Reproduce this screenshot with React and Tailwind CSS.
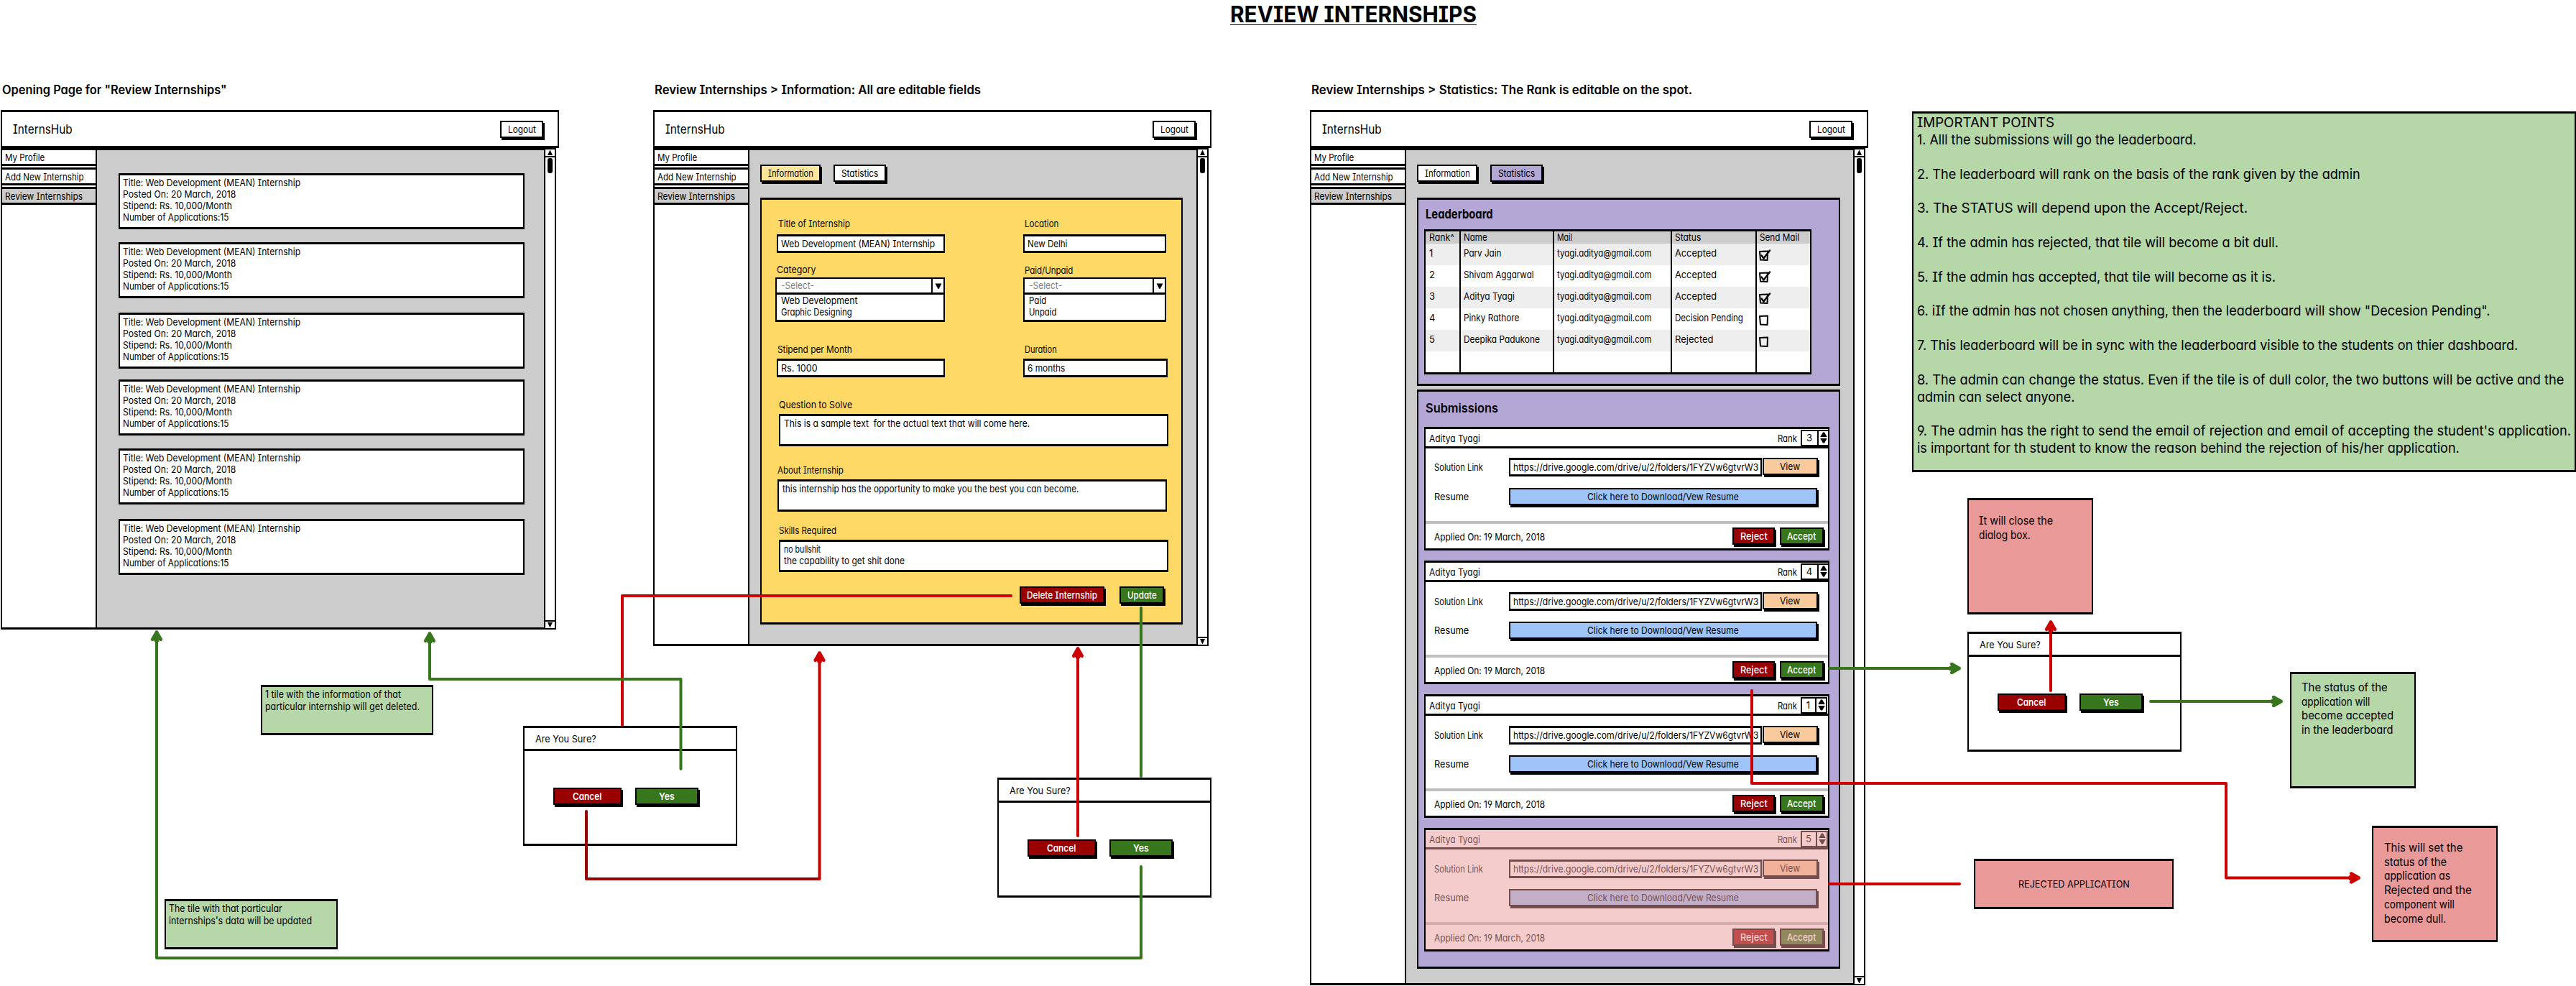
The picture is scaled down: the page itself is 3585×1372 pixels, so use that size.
import { useLayoutEffect, useRef } from "react";

/* Text condensed or widened horizontally so that the line is `w` pixels wide. */
function T({ w, className = "", children }) {
  const ref = useRef(null);
  useLayoutEffect(() => {
    const el = ref.current;
    if (!w || !el) return;
    const natural = el.offsetWidth;
    el.style.transform = `scaleX(${w / natural})`;
    el.style.marginRight = `${w - natural}px`;
  }, [w, children]);
  return (
    <span className={`block whitespace-pre ${className}`}>
      <span ref={ref} className="inline-block origin-left">{children}</span>
    </span>
  );
}

const FRAME = "border-x-2 border-y-[3px] border-black";

function Button({ w, className = "", children }) {
  return (
    <button className={`flex h-[24px] shrink-0 items-center justify-center border-2 border-black text-[13px] leading-4 shadow-[2px_3px_0_#000] ${className}`}>
      <T w={w}>{children}</T>
    </button>
  );
}

function Window({ title, titleWidth, className, bodyClass, children }) {
  const menu = [
    ["My Profile", 55, "bg-white"],
    ["Add New Internship", 110, "bg-white"],
    ["Review Internships", 108, "bg-[#ccc]"],
  ];
  return (
    <section className={`absolute top-[116px] flex w-[777px] flex-col ${className}`}>
      <h2 className="h-[37px] pl-[2px] text-[17px] font-semibold leading-[18px]">
        <T w={titleWidth}>{title}</T>
      </h2>
      <header className={`flex h-[53px] items-center justify-between bg-white pl-[15px] pr-[20px] ${FRAME}`}>
        <T w={83} className="pt-px text-[17px] leading-5">InternsHub</T>
        <Button w={39} className="w-[60px] bg-white">Logout</Button>
      </header>
      <div className={`flex ${bodyClass}`}>
        <nav className="flex w-[132px] shrink-0 flex-col gap-[2px] border-b-[3px] border-l-2 border-black bg-white">
          {menu.map(([label, w, bg]) => (
            <div key={label} className={`-ml-[2px] flex h-[25px] items-center border-y-[3px] border-l-2 border-black pl-[4px] text-[13px] leading-4 ${bg}`}>
              <T w={w}>{label}</T>
            </div>
          ))}
        </nav>
        <main className={`w-[626px] shrink-0 bg-[#ccc] ${FRAME}`}>{children}</main>
        <div className="flex w-[15px] shrink-0 flex-col items-center border-b-2 border-r-2 border-t-2 border-black bg-white">
          <svg viewBox="0 0 13 9" className="h-[9px] w-[13px]"><path d="M6.5 0.5 10 8H3Z" /></svg>
          <div className="h-[2px] w-full bg-black" />
          <div className="mt-px h-[21px] w-[7px] rounded-[3px] bg-black" />
          <div className="mt-auto h-[2px] w-full bg-black" />
          <svg viewBox="0 0 13 9" className="h-[9px] w-[13px]"><path d="M6.5 8.5 10 1H3Z" /></svg>
        </div>
      </div>
    </section>
  );
}

function InternshipCard({ className = "" }) {
  return (
    <article className={`h-[78px] w-[565px] bg-white pl-[4px] pt-[2px] text-[13px] leading-4 ${FRAME} ${className}`}>
      <T w={247}>Title: Web Development (MEAN) Internship</T>
      <T w={157}>Posted On: 20 March, 2018</T>
      <T w={152}>Stipend: Rs. 10,000/Month</T>
      <T w={147}>Number of Applications:15</T>
    </article>
  );
}

function Field({ w, className = "", children }) {
  return (
    <div className={`flex h-[26px] items-center bg-white pl-[4px] leading-4 ${FRAME} ${className}`}>
      <T w={w} className="-mt-px">{children}</T>
    </div>
  );
}

function Select({ options, className = "", listClass = "" }) {
  return (
    <div className={className}>
      <div className="flex h-[21px] border-2 border-b-0 border-black bg-white">
        <T w={46} className="flex-1 pl-[6px] pt-px text-[#808080]">-Select-</T>
        <div className="flex w-[17px] items-center justify-center border-l-2 border-black">
          <svg viewBox="0 0 10 8" className="h-[8px] w-[10px]"><path d="M0.5 0.5h9L5.5 8h-1Z" /></svg>
        </div>
      </div>
      <div className={`h-[41px] bg-white pl-[6px] ${FRAME} ${listClass}`}>
        {options.map(([label, w]) => <T key={label} w={w}>{label}</T>)}
      </div>
    </div>
  );
}

function TextArea({ lines, className = "" }) {
  return (
    <div className={`h-[45px] w-[542px] bg-white pl-[5px] pt-[2px] ${FRAME} ${className}`}>
      {lines.map(([text, w]) => <T key={text} w={w}>{text}</T>)}
    </div>
  );
}

function Tabs({ info, stats }) {
  return (
    <div className="flex gap-[18px] pl-[15px] pt-[20px]">
      <Button w={63} className={`w-[84px] ${info}`}>Information</Button>
      <Button w={51} className={`w-[73px] ${stats}`}>Statistics</Button>
    </div>
  );
}

function InformationForm() {
  return (
    <form className={`ml-[15px] mt-[22px] h-[594px] w-[588px] bg-[#ffd966] pl-[21px] pt-[25px] text-[13px] leading-4 ${FRAME}`}>
      <div className="flex gap-[109px]">
        <div className="w-[234px]">
          <T w={100} className="pl-[2px]">Title of Internship</T>
          <Field w={214} className="mt-[7px]">Web Development (MEAN) Internship</Field>
          <T w={54} className="mt-[15px]">Category</T>
          <Select className="-ml-[2px] mt-[3px]" options={[["Web Development", 107], ["Graphic Designing", 99]]} />
          <T w={104} className="mt-[30px] pl-px">Stipend per Month</T>
          <Field w={51} className="mt-[5px]">Rs. 1000</Field>
        </div>
        <div className="w-[199px]">
          <T w={47} className="pl-[2px]">Location</T>
          <Field w={55} className="mt-[7px]">New Delhi</Field>
          <T w={67} className="mt-[16px] pl-[2px]">Paid/Unpaid</T>
          <Select className="mt-[2px]" listClass="pl-[5px]" options={[["Paid", 24], ["Unpaid", 38]]} />
          <T w={45} className="mt-[30px] pl-[2px]">Duration</T>
          <Field w={52} className="mt-[5px] w-[201px]">6 months</Field>
        </div>
      </div>
      <div className="pl-[3px]">
        <T w={102} className="mt-[30px]">Question to Solve</T>
        <TextArea className="mt-[5px]" lines={[["This is a sample text  for the actual text that will come here.", 342]]} />
        <T w={92} className="-ml-[2px] mt-[25px]">About Internship</T>
        <TextArea className="-ml-[2px] mt-[5px]" lines={[["this internship has the opportunity to make you the best you can become.", 412]]} />
        <T w={80} className="mt-[18px]">Skills Required</T>
        <TextArea className="mt-[5px]" lines={[["no bullshit", 51], ["the capability to get shit done", 168]]} />
        <div className="mt-[20px] flex gap-[21px] pl-[335px] font-medium text-white">
          <Button w={98} className="w-[118px] bg-[#990000]">Delete Internship</Button>
          <Button w={41} className="w-[62px] bg-[#38761d]">Update</Button>
        </div>
      </div>
    </form>
  );
}

function CheckBox({ checked }) {
  return (
    <svg viewBox="0 0 18 18" className="h-[18px] w-[18px]" fill="none" stroke="#000" strokeWidth="2" strokeLinecap="round" strokeLinejoin="round">
      <path d="M2 4 13 3.6 12.6 16 3 15.6Z" />
      {checked && <path d="M4.5 9.5 7.5 13.5 16 2.5" strokeWidth="2.4" />}
    </svg>
  );
}

function Leaderboard() {
  const mail = "tyagi.aditya@gmail.com";
  const rows = [
    ["1", "Parv Jain", 52, "Accepted", 58, true],
    ["2", "Shivam Aggarwal", 98, "Accepted", 58, true],
    ["3", "Aditya Tyagi", 71, "Accepted", 58, true],
    ["4", "Pinky Rathore", 77, "Decision Pending", 95, false],
    ["5", "Deepika Padukone", 106, "Rejected", 54, false],
  ];
  const cols = "grid grid-cols-[47px_130px_164px_118px_76px]";
  const cell = "border-l-2 border-black pl-[4px]";
  return (
    <section className={`ml-[15px] mt-[22px] h-[262px] w-[589px] bg-[#b4a7d6] pl-[8px] ${FRAME}`}>
      <h3 className="pl-[2px] pt-[10px] text-[17px] font-bold leading-5"><T w={94}>Leaderboard</T></h3>
      <div className={`mt-[11px] h-[202px] w-[539px] bg-white text-[13px] leading-4 ${FRAME}`}>
        <div className={`h-[17px] bg-[#ccc] ${cols}`}>
          <T w={35} className="pl-[5px]">Rank^</T>
          <T w={33} className={cell}>Name</T>
          <T w={21} className={cell}>Mail</T>
          <T w={36} className={cell}>Status</T>
          <T w={55} className={cell}>Send Mail</T>
        </div>
        {rows.map(([rank, name, nw, status, sw, checked]) => (
          <div key={rank} className={`h-[30px] odd:bg-white even:bg-[#eee] ${cols}`}>
            <T className="pl-[5px] pt-[5px]">{rank}</T>
            <T w={nw} className={`pt-[5px] ${cell}`}>{name}</T>
            <T w={132} className={`pt-[5px] ${cell}`}>{mail}</T>
            <T w={sw} className={`pt-[5px] ${cell}`}>{status}</T>
            <div className="border-l-2 border-black pl-[2px] pt-[7px]"><CheckBox checked={checked} /></div>
          </div>
        ))}
        <div className={`h-[29px] ${cols}`}>
          <div />
          <div className={cell} />
          <div className={cell} />
          <div className={cell} />
          <div className={cell} />
        </div>
      </div>
    </section>
  );
}

function Submission({ rank, spinner = "w-[40px]", first, rejected }) {
  return (
    <article className={`relative h-[172px] w-[564px] shrink-0 bg-white text-[13px] leading-4 ${FRAME}`}>
      <header className="flex h-[27px] items-center border-b-[3px] border-black pl-[5px]">
        <T w={71} className="pt-px">Aditya Tyagi</T>
        <T w={27} className="ml-auto pt-px">Rank</T>
        <div className="ml-[5px] w-[38px]">
          <div className={`flex h-[23px] border-2 border-black bg-white ${spinner}`}>
            <span className="flex-1 pr-px pt-px text-center">{rank}</span>
            <span className="flex w-[15px] items-center justify-center border-l-2 border-black">
              <svg viewBox="0 0 10 16" className="h-[16px] w-[10px]"><path d="M4 0.5h2L9.8 7H0.2ZM0.2 9h9.6L6 15.5H4Z" /></svg>
            </span>
          </div>
        </div>
      </header>
      <div className={`h-[101px] pl-[12px] ${first ? "pt-[13px]" : "pt-[14px]"}`}>
        <div className="flex h-[26px] items-center">
          <T w={68} className="w-[104px]">Solution Link</T>
          <Field w={341} className="w-[352px] shrink-0">https://drive.google.com/drive/u/2/folders/1FYZVw6gtvrW3</Field>
          <Button w={28} className="ml-px w-[77px] -translate-y-px bg-[#f9cb9c]">View</Button>
        </div>
        <div className={`flex items-center ${first ? "mt-[16px]" : "mt-[15px]"}`}>
          <T w={48} className="w-[104px]">Resume</T>
          <Button w={211} className="w-[429px] bg-[#9fc5f8]">Click here to Download/Vew Resume</Button>
        </div>
      </div>
      <div className="h-[4px] bg-[#bfbfbf]" />
      <footer className="flex h-[34px] items-center pl-[12px]">
        <T w={154} className="pt-[2px]">Applied On: 19 March, 2018</T>
        <div className="ml-auto flex gap-[7px] pr-[6px] font-medium text-white">
          <Button w={38} className="w-[59px] bg-[#990000]">Reject</Button>
          <Button w={40} className="w-[61px] bg-[#38761d]">Accept</Button>
        </div>
      </footer>
      {rejected && <div className="absolute inset-0 bg-[#ea9999]/50" />}
    </article>
  );
}

function Submissions() {
  return (
    <section className={`ml-[15px] mt-[5px] h-[806px] w-[589px] bg-[#b4a7d6] pl-[8px] ${FRAME}`}>
      <h3 className="pl-[2px] pt-[13px] text-[17px] font-semibold leading-5"><T w={101}>Submissions</T></h3>
      <div className="mt-[16px] flex flex-col gap-[14px]">
        <Submission rank="3" first />
        <Submission rank="4" />
        <Submission rank="1" spinner="w-[37px]" />
        <Submission rank="5" spinner="w-[38px]" rejected />
      </div>
    </section>
  );
}

function Dialog({ className }) {
  return (
    <section className={`absolute h-[167px] w-[298px] bg-white ${FRAME} ${className}`}>
      <header className="flex h-[32px] items-center border-b-[3px] border-black pl-[15px]">
        <T w={85} className="pt-px text-[13px] leading-4">Are You Sure?</T>
      </header>
      <div className="flex gap-[19px] pl-[40px] pt-[51px] font-semibold text-white">
        <Button w={40} className="w-[95px] bg-[#990000]">Cancel</Button>
        <Button w={22} className="w-[88px] bg-[#38761d]">Yes</Button>
      </div>
    </section>
  );
}

function Note({ lines, className }) {
  return (
    <aside className={`absolute ${FRAME} ${className}`}>
      {lines.map(([text, w], i) => (
        <T key={i} w={w}>{text || " "}</T>
      ))}
    </aside>
  );
}

function Arrow({ x, y, turn = 0, color }) {
  return (
    <path
      transform={`translate(${x} ${y}) rotate(${turn})`}
      d="M-1 1H1L7.5 12.5 6.5 14.5 2.5 13V15.5H-2.5V13L-6.5 14.5-7.5 12.5Z"
      fill={color}
      stroke={color}
      strokeWidth="1.5"
      strokeLinejoin="round"
    />
  );
}

function Connectors() {
  const red = "#cc0000";
  const dark = "#990000";
  const green = "#38761d";
  return (
    <svg viewBox="0 0 3585 1372" className="pointer-events-none absolute left-0 top-0 h-[1372px] w-[3585px]" fill="none" strokeWidth="4" strokeLinecap="round" strokeLinejoin="round">
      <path stroke={red} d="M1407 829H866V1009" />
      <path stroke={green} d="M947.5 1070V945H598V888" />
      <path stroke={dark} d="M816 1129V1223H1140" />
      <path stroke={red} d="M1140.5 1223V916" />
      <path stroke={green} d="M1588 846V1080" />
      <path stroke={green} d="M1588 1206V1333H218V888" />
      <path stroke={red} d="M1500 1163V910" />
      <path stroke={green} d="M2546 930H2718" />
      <path stroke={red} d="M2438 961V1090H3098V1221.500H3274" />
      <path stroke={red} d="M2546 1230H2727" />
      <path stroke={red} d="M2854 961V874" />
      <path stroke={green} d="M2993 976H3166" />
      <Arrow x={598} y={879} color={green} />
      <Arrow x={218} y={877} color={green} />
      <Arrow x={1140.5} y={906} color={red} />
      <Arrow x={1500} y={900} color={red} />
      <Arrow x={2729} y={930} turn={90} color={green} />
      <Arrow x={3285} y={1221.5} turn={90} color={red} />
      <Arrow x={2854} y={863} color={red} />
      <Arrow x={3177} y={976} turn={90} color={green} />
    </svg>
  );
}

export default function App() {
  return (
    <div className="relative h-[1372px] w-[3585px] overflow-hidden bg-white font-['Inter','Noto_Sans',sans-serif] text-black [font-feature-settings:'cv11','cv08','cv04']">
      <h1 className="absolute left-[1712px] top-[4px] h-[31px] w-[343px] border-b border-black text-[31px] font-bold leading-[31px]">
        <T w={343}>REVIEW INTERNSHIPS</T>
      </h1>

      <Window title={'Opening Page for "Review Internships"'} titleWidth={313} className="left-px" bodyClass="h-[670px]">
        <div className="pl-[30px] pt-[32px]">
          <InternshipCard />
          <InternshipCard className="mt-[18px]" />
          <InternshipCard className="mt-[20px]" />
          <InternshipCard className="mt-[15px]" />
          <InternshipCard className="mt-[18px]" />
          <InternshipCard className="mt-[20px]" />
        </div>
      </Window>

      <Window title="Review Internships > Information: All are editable fields" titleWidth={454} className="left-[909px]" bodyClass="h-[693px]">
        <Tabs info="bg-[#ffe599]" stats="bg-white" />
        <InformationForm />
      </Window>

      <Window title="Review Internships > Statistics: The Rank is editable on the spot." titleWidth={530} className="left-[1823px]" bodyClass="h-[1165px]">
        <Tabs info="bg-white" stats="bg-[#b4a7d6]" />
        <Leaderboard />
        <Submissions />
      </Window>

      <Dialog className="left-[728px] top-[1010px]" />
      <Dialog className="left-[1388px] top-[1082px]" />
      <Dialog className="left-[2738px] top-[879px]" />

      <Note
        className="left-[363px] top-[953px] h-[70px] w-[240px] bg-[#b6d7a8] pl-[4px] pt-px text-[14px] leading-[17px]"
        lines={[["1 tile with the information of that", 189], ["particular internship will get deleted.", 215]]}
      />
      <Note
        className="left-[229px] top-[1251px] h-[70px] w-[241px] bg-[#b6d7a8] pl-[4px] pt-px text-[14px] leading-[17px]"
        lines={[["The tile with that particular", 158], ["internships's data will be updated", 199]]}
      />
      <Note
        className="left-[2661px] top-[155px] h-[502px] w-[924px] bg-[#b6d7a8] pl-[5px] pt-px text-[19px] leading-[23.85px]"
        lines={[
          ["IMPORTANT POINTS", 191],
          ["1. Alll the submissions will go the leaderboard.", 389],
          [""],
          ["2. The leaderboard will rank on the basis of the rank given by the admin", 617],
          [""],
          ["3. The STATUS will depend upon the Accept/Reject.", 460],
          [""],
          ["4. If the admin has rejected, that tile will become a bit dull.", 503],
          [""],
          ["5. If the admin has accepted, that tile will become as it is.", 499],
          [""],
          ['6. iIf the admin has not chosen anything, then the leaderboard will show "Decesion Pending".', 797],
          [""],
          ["7. This leaderboard will be in sync with the leaderboard visible to the students on thier dashboard.", 836],
          [""],
          ["8. The admin can change the status. Even if the tile is of dull color, the two buttons will be active and the", 900],
          ["admin can select anyone.", 219],
          [""],
          ["9. The admin has the right to send the email of rejection and email of accepting the student's application.", 910],
          ["is important for th student to know the reason behind the rejection of his/her application.", 755],
        ]}
      />
      <Note
        className="left-[2738px] top-[693px] h-[162px] w-[175px] bg-[#ea9999] pl-[14px] pt-[18px] text-[16px] leading-5"
        lines={[["It will close the", 103], ["dialog box.", 72]]}
      />
      <Note
        className="left-[3187px] top-[935px] h-[162px] w-[175px] bg-[#b6d7a8] pl-[14px] pt-[9px] text-[16px] leading-[19.7px]"
        lines={[["The status of the", 120], ["application will", 95], ["become accepted", 128], ["in the leaderboard", 128]]}
      />
      <Note
        className="left-[3301px] top-[1149px] h-[162px] w-[175px] bg-[#ea9999] pl-[15px] pt-[18px] text-[16px] leading-[19.7px]"
        lines={[["This will set the", 109], ["status of the", 87], ["application as", 92], ["Rejected and the", 122], ["component will", 98], ["become dull.", 86]]}
      />
      <Note
        className="left-[2747px] top-[1195px] flex h-[70px] w-[278px] items-center justify-center bg-[#ea9999] text-[13px] leading-4"
        lines={[["REJECTED APPLICATION", 155]]}
      />

      <Connectors />
    </div>
  );
}
